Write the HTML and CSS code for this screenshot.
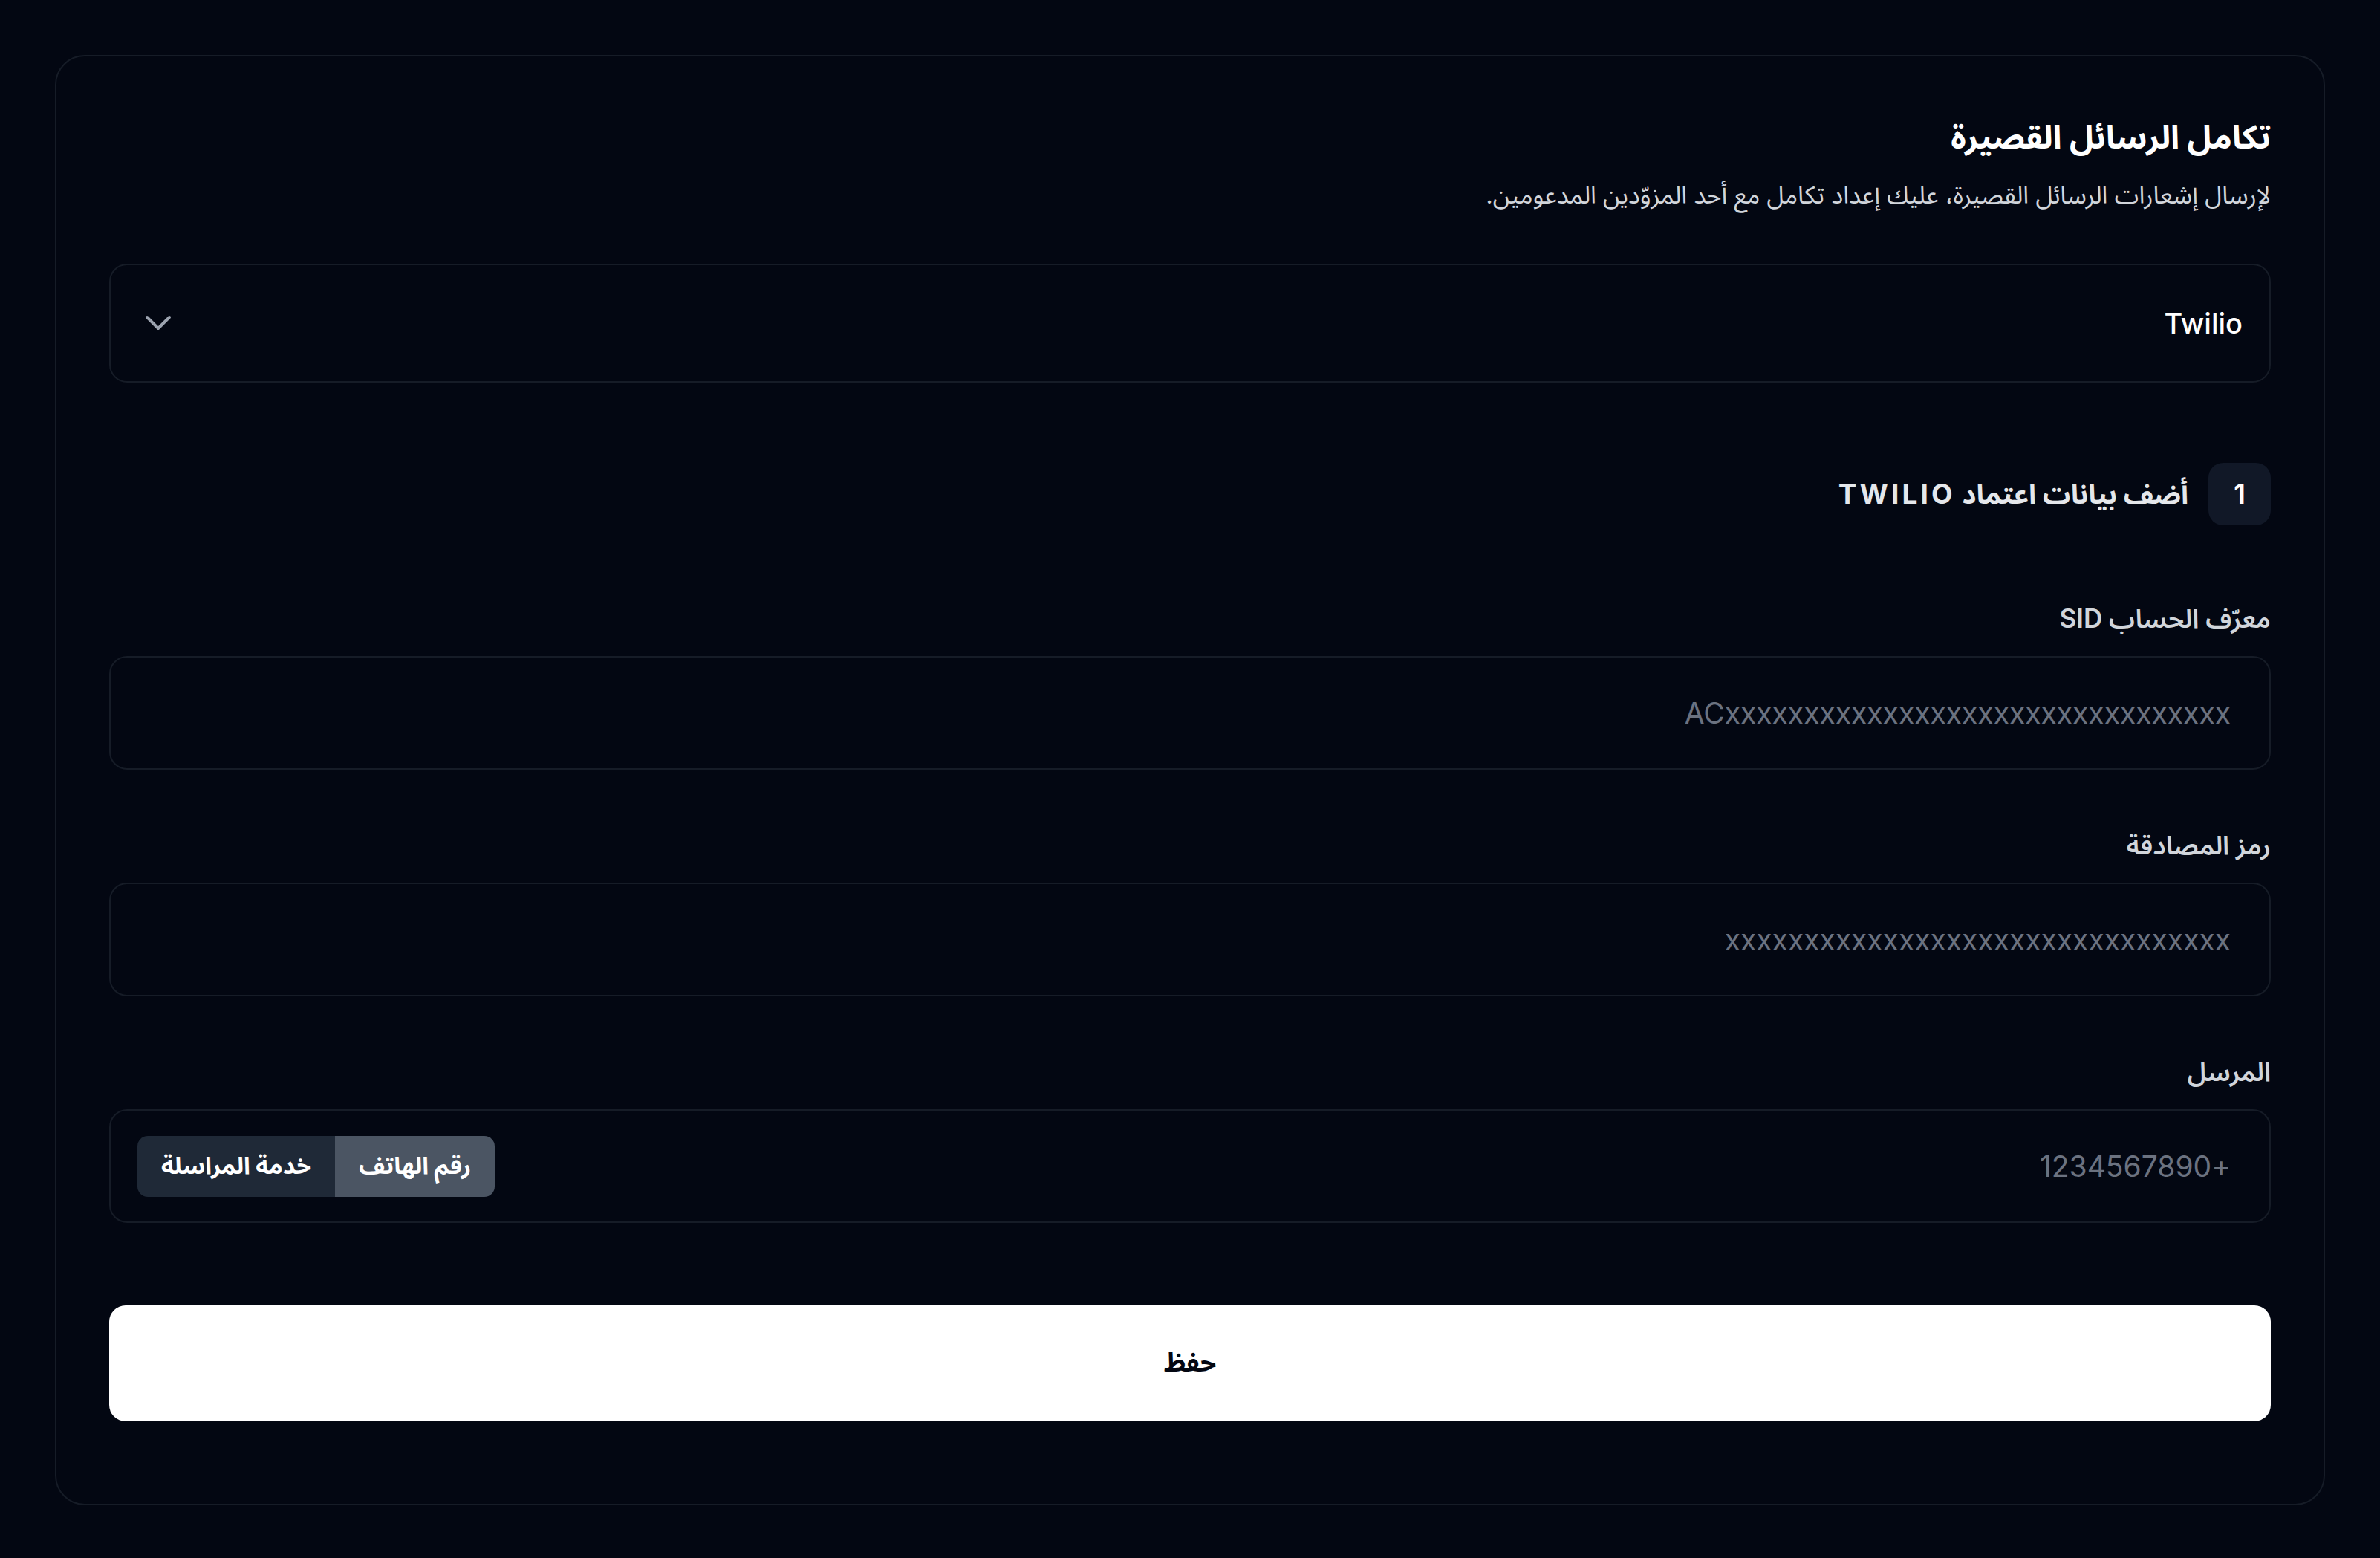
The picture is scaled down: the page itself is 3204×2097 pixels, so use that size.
FILE: index.html
```html
<!DOCTYPE html>
<html lang="ar" dir="rtl">
<head>
<meta charset="utf-8">
<title>تكامل الرسائل القصيرة</title>
<link rel="stylesheet" href="styles.css">
</head>
<body>
<main class="page">
  <section class="card">
    <h1 class="title">تكامل الرسائل القصيرة</h1>
    <p class="subtitle">لإرسال إشعارات الرسائل القصيرة، عليك إعداد تكامل مع أحد المزوّدين المدعومين.</p>

    <div class="select">
      <span class="select-value">Twilio</span>
      <svg class="chevron" width="36" height="22" viewBox="0 0 36 22" aria-hidden="true">
        <polyline points="3,3 18,18 33,3" fill="none" stroke="#9ca3af" stroke-width="4" stroke-linecap="round" stroke-linejoin="round"/>
      </svg>
    </div>

    <div class="step">
      <span class="step-num">1</span>
      <span class="step-title">أضف بيانات اعتماد <span class="latin-caps">TWILIO</span></span>
    </div>

    <div class="field">
      <label class="label">معرّف الحساب SID</label>
      <div class="input"><span class="placeholder ltr">ACxxxxxxxxxxxxxxxxxxxxxxxxxxxxxxxx</span></div>
    </div>

    <div class="field">
      <label class="label">رمز المصادقة</label>
      <div class="input"><span class="placeholder ltr">xxxxxxxxxxxxxxxxxxxxxxxxxxxxxxxx</span></div>
    </div>

    <div class="field">
      <label class="label">المرسل</label>
      <div class="input input-sender">
        <span class="placeholder">+1234567890</span>
        <div class="segmented">
          <span class="seg seg-active">رقم الهاتف</span>
          <span class="seg">خدمة المراسلة</span>
        </div>
      </div>
    </div>

    <button class="save" type="button">حفظ</button>
  </section>
</main>
</body>
</html>
```
FILE: styles.css
```css
html, body {
  margin: 0;
  padding: 0;
  background: #030712;
}

body {
  font-family: Inter, "Noto Sans Arabic", "Noto Naskh Arabic", system-ui, sans-serif;
  color: #ffffff;
}

.page {
  padding: 74px;
  box-sizing: border-box;
  min-height: 2097px;
}

.card {
  border: 2px solid #161c27;
  border-radius: 40px;
  padding: 78px 71px 111px;
  display: flex;
  flex-direction: column;
}

.title {
  margin: 0;
  font-size: 44px;
  line-height: 60px;
  font-weight: 700;
  color: #ffffff;
}

.subtitle {
  margin: 24px 0 0;
  font-size: 33px;
  line-height: 48px;
  font-weight: 400;
  color: #d1d5db;
}

.select {
  margin-top: 69px;
  height: 160px;
  box-sizing: border-box;
  border: 2px solid #161c27;
  border-radius: 24px;
  display: flex;
  align-items: center;
  justify-content: space-between;
  padding: 0 36px 0 46px;
}

.select-value {
  font-size: 38px;
  font-weight: 500;
  color: #ffffff;
}

.chevron {
  display: block;
}

.step {
  margin-top: 108px;
  display: flex;
  align-items: center;
  gap: 27px;
}

.step-num {
  width: 84px;
  height: 84px;
  border-radius: 20px;
  background: #111827;
  display: flex;
  align-items: center;
  justify-content: center;
  font-size: 38px;
  font-weight: 600;
  color: #ffffff;
}

.step-title {
  font-size: 37px;
  line-height: 48px;
  font-weight: 700;
  color: #e5e7eb;
}

.latin-caps {
  letter-spacing: 0.11em;
}

.field {
  display: flex;
  flex-direction: column;
  gap: 27px;
}

.step + .field {
  margin-top: 101px;
}

.field + .field {
  margin-top: 77px;
}

.label {
  font-size: 35px;
  line-height: 48px;
  font-weight: 600;
  color: #d1d5db;
}

.input {
  height: 153px;
  box-sizing: border-box;
  border: 2px solid #161c27;
  border-radius: 24px;
  display: flex;
  align-items: center;
  padding: 0 52px 0 36px;
}

.placeholder {
  font-size: 39px;
  color: #6b7280;
}

.ltr {
  direction: ltr;
  unicode-bidi: isolate;
}

.input-sender {
  justify-content: space-between;
}

.segmented {
  display: flex;
  height: 82px;
  border-radius: 14px;
  overflow: hidden;
}

.seg {
  display: flex;
  align-items: center;
  justify-content: center;
  padding: 0 32px;
  background: #1f2937;
  font-size: 32px;
  font-weight: 700;
  color: #ffffff;
}

.seg-active {
  background: #4b5563;
}

.save {
  margin-top: 111px;
  height: 156px;
  border: none;
  border-radius: 22px;
  background: #ffffff;
  color: #030712;
  font-family: inherit;
  font-size: 35px;
  font-weight: 700;
  cursor: pointer;
}
```
